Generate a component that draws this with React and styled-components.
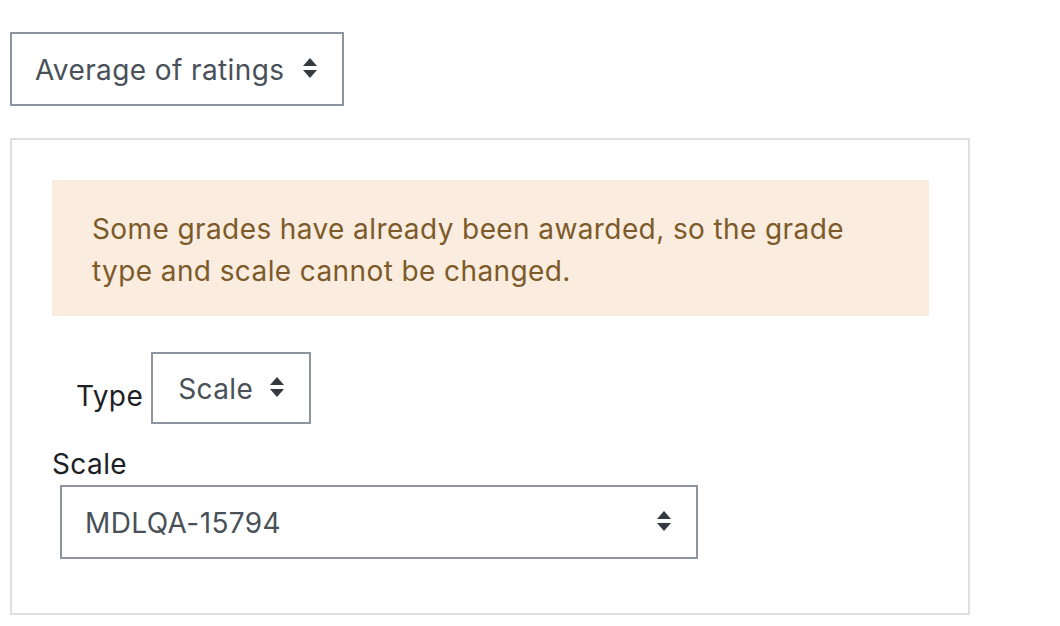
import React from 'react';
import styled, { createGlobalStyle } from 'styled-components';

const GlobalStyle = createGlobalStyle`
  body {
    margin: 0;
    background: #fff;
    font-family: Inter, "Liberation Sans", sans-serif;
  }
`;

const Page = styled.div`
  padding: 32px 0 0 10px;
  display: flex;
  flex-direction: column;
  align-items: flex-start;
`;

const SelectBox = styled.div`
  box-sizing: border-box;
  display: flex;
  align-items: center;
  justify-content: space-between;
  height: ${p => p.$h || 74}px;
  width: ${p => p.$w}px;
  padding: 2px 24px 0 ${p => p.$pl || 23}px;
  border: 2px solid #8f959e;
  color: #495057;
  font-size: 28px;
  letter-spacing: 0.4px;

  svg {
    margin-top: -2px;
  }
`;

const Panel = styled.div`
  box-sizing: border-box;
  margin-top: 32px;
  width: 960px;
  height: 477px;
  border: 2px solid #dedfe1;
  padding: 40px 39px 0 40px;
`;

const Alert = styled.div`
  background: #faeddf;
  color: #7d5a29;
  font-size: 28px;
  line-height: 42px;
  letter-spacing: 0.4px;
  padding: 28px 40px 24px;
  margin-bottom: 36px;
`;

const Row = styled.div`
  display: flex;
  align-items: flex-start;
  padding-left: ${p => p.$indent || 0}px;
`;

const Label = styled.div`
  color: #1d2125;
  font-size: 28px;
  letter-spacing: 0.4px;
  line-height: 42px;
  padding-top: ${p => p.$pt || 0}px;
  margin-right: ${p => p.$mr || 0}px;
`;

const Field = styled.div`
  margin-top: ${p => p.$mt || 0}px;
  padding-left: ${p => p.$indent || 0}px;
`;

const Arrows = () => (
  <svg width="16" height="22" viewBox="0 0 16 22">
    <path d="M8 0 L15 8 L1 8 Z" fill="#343a40" />
    <path d="M1 12 L15 12 L8 20 Z" fill="#343a40" />
  </svg>
);

export default function App() {
  return (
    <>
      <GlobalStyle />
      <Page>
        <SelectBox $w={334}>
          <span>Average of ratings</span>
          <Arrows />
        </SelectBox>
        <Panel>
          <Alert>
            Some grades have already been awarded, so the grade
            <br />
            type and scale cannot be changed.
          </Alert>
          <Row $indent={24}>
            <Label $pt={23} $mr={8}>Type</Label>
            <SelectBox $w={160} $h={72} $pl={25}>
              <span>Scale</span>
              <Arrows />
            </SelectBox>
          </Row>
          <Field $mt={19}>
            <Label>Scale</Label>
          </Field>
          <Field $mt={0} $indent={8}>
            <SelectBox $w={638}>
              <span>MDLQA-15794</span>
              <Arrows />
            </SelectBox>
          </Field>
        </Panel>
      </Page>
    </>
  );
}
